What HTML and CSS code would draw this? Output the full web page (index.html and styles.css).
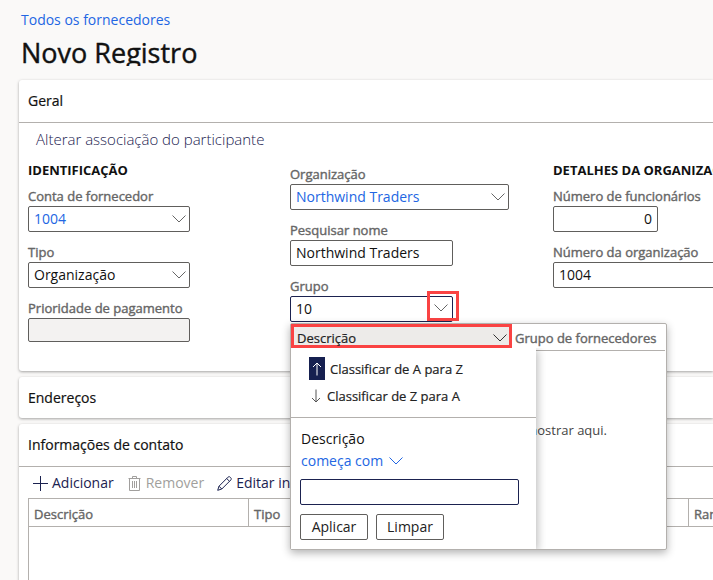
FILE: index.html
```html
<!DOCTYPE html>
<html lang="pt-BR">
<head>
<meta charset="utf-8">
<meta name="viewport" content="width=device-width, initial-scale=1">
<title>Novo Registro</title>
<link rel="stylesheet" href="styles.css">
</head>
<body>
<header class="page-header">
  <a class="breadcrumb" href="#">Todos os fornecedores</a>
  <h1 class="page-title">Novo Registro</h1>
</header>
<main class="sections">
  <section class="card general">
    <h2 class="card-title ruled">Geral</h2>
    <button class="command" type="button">Alterar associação do participante</button>
    <div class="columns">
      <div class="column">
        <h3 class="group-title">IDENTIFICAÇÃO</h3>
        <div class="field">
          <label for="account">Conta de fornecedor</label>
          <div class="box mid">
            <input id="account" class="linked" type="text" value="1004">
            <button class="drop" type="button" aria-label="Abrir"><svg class="chevron" viewBox="0 0 14 8"><path d="M.5.5 7 7 13.5.5"/></svg></button>
          </div>
        </div>
        <div class="field">
          <label for="type">Tipo</label>
          <div class="box mid">
            <select id="type"><option>Organização</option></select>
            <svg class="chevron over" viewBox="0 0 14 8"><path d="M.5.5 7 7 13.5.5"/></svg>
          </div>
        </div>
        <div class="field">
          <label for="priority">Prioridade de pagamento</label>
          <div class="box mid disabled"><input id="priority" type="text" disabled></div>
        </div>
      </div>
      <div class="column untitled">
        <div class="field">
          <label for="org">Organização</label>
          <div class="box wide">
            <input id="org" class="linked" type="text" value="Northwind Traders">
            <button class="drop" type="button" aria-label="Abrir"><svg class="chevron" viewBox="0 0 14 8"><path d="M.5.5 7 7 13.5.5"/></svg></button>
          </div>
        </div>
        <div class="field">
          <label for="search">Pesquisar nome</label>
          <div class="box"><input id="search" type="text" value="Northwind Traders"></div>
        </div>
        <div class="field lookup-field">
          <label for="group">Grupo</label>
          <div class="box focused">
            <input id="group" type="text" value="10">
            <button class="drop marked" type="button" aria-label="Abrir"><svg class="chevron" viewBox="0 0 14 8"><path d="M.5.5 7 7 13.5.5"/></svg></button>
          </div>
          <div class="lookup">
            <div class="lookup-head">
              <button class="lookup-sort" type="button">Descrição<svg class="chevron dark" viewBox="0 0 14 8"><path d="M.5.5 7 7 13.5.5"/></svg></button>
              <span class="lookup-col">Grupo de fornecedores</span>
            </div>
            <p class="lookup-empty">mostrar aqui.</p>
            <div class="menu">
              <div class="menu-sorts">
                <button class="sort" type="button"><span class="arrow on"><svg viewBox="0 0 10 14"><path d="M5 13.5V1M1 5l4-4 4 4"/></svg></span>Classificar de A para Z</button>
                <button class="sort" type="button"><span class="arrow"><svg viewBox="0 0 10 14"><path d="M5 .5V13M1 9l4 4 4-4"/></svg></span>Classificar de Z para A</button>
              </div>
              <div class="menu-filter">
                <label for="filter">Descrição</label>
                <button class="operator" type="button">começa com<svg class="chevron blue" viewBox="0 0 14 8"><path d="M.5.5 7 7 13.5.5"/></svg></button>
                <input id="filter" class="filter-input" type="text">
                <div class="menu-actions">
                  <button class="btn" type="button">Aplicar</button>
                  <button class="btn" type="button">Limpar</button>
                </div>
              </div>
            </div>
          </div>
        </div>
      </div>
      <div class="column">
        <h3 class="group-title">DETALHES DA ORGANIZAÇÃO</h3>
        <div class="field">
          <label for="staff">Número de funcionários</label>
          <div class="box small"><input id="staff" class="number" type="text" value="0"></div>
        </div>
        <div class="field">
          <label for="orgno">Número da organização</label>
          <div class="box wide"><input id="orgno" type="text" value="1004"></div>
        </div>
      </div>
    </div>
  </section>
  <section class="card"><h2 class="card-title">Endereços</h2></section>
  <section class="card contacts">
    <h2 class="card-title ruled">Informações de contato</h2>
    <div class="toolbar">
      <button class="tool" type="button"><svg class="icon" viewBox="0 0 15 15"><path d="M7.500 0v15M0 7.500h15"/></svg>Adicionar</button>
      <button class="tool" type="button" disabled><svg class="icon" viewBox="0 0 15 15"><path d="M1.500 2.500h12M5.500 2.500v-2h4v2M2.500 2.500v12h10v-12M5.500 5v7M7.500 5v7M9.500 5v7"/></svg>Remover</button>
      <button class="tool" type="button"><svg class="icon thin" viewBox="0 0 15 15"><path d="M.7 14.300 2 10.200 11 1.200c.7-.7 1.600-.7 2.200 0l.6.6c.6.6.6 1.500 0 2.200l-9 9zM2 10.200l2.800 2.800M9.700 2.500l2.800 2.800"/></svg>Editar informações</button>
    </div>
    <table class="grid">
      <thead><tr><th class="c-desc" scope="col">Descrição</th><th class="c-type" scope="col">Tipo</th><th scope="col">Rank</th></tr></thead>
      <tbody><tr><td colspan="3"></td></tr></tbody>
    </table>
  </section>
</main>
</body>
</html>
```
FILE: styles.css
```css
* { box-sizing: border-box; }
body {
  margin: 0;
  background: #faf9f8;
  color: #111;
  font: 14px/20px "Open Sans", "Noto Sans", sans-serif;
  overflow: hidden;
}
button, input, select { font: inherit; color: inherit; margin: 0; }
button { background: none; border: 0; padding: 0; white-space: nowrap; }
h1, h2, h3, p { margin: 0; }
svg { display: block; fill: none; stroke: currentColor; flex: none; }

.page-header { padding: 10px 21px 14px; }
.breadcrumb { display: block; color: #2266e3; text-decoration: none; }
.page-title { height: 36px; font-size: 27px; line-height: 46px; font-weight: 400; -webkit-text-stroke: .4px; overflow: hidden; }

.sections { display: flex; flex-direction: column; gap: 6px; padding-left: 19px; overflow: hidden; padding-top: 3px; margin-top: -3px; }
.card { background: #fff; border-radius: 3px 0 0 3px; box-shadow: 0 1px 3px rgba(0, 0, 0, .35); }
.general { min-height: 291px; }
.card-title { padding: 11px 9px 10px; font-size: 14px; font-weight: 400; -webkit-text-stroke: .2px; }
.ruled { padding-bottom: 11px; border-bottom: 1px solid #b3b0ad; }
.command { display: block; padding: 6px 17px; color: #1b2250; font-size: 15px; font-weight: 300; }

.columns { display: grid; grid-template-columns: 262px 263px minmax(0, 1fr); padding: 5px 0 0 9px; }
.untitled { padding-top: 4px; }
.group-title { margin-bottom: 6px; font-size: 13px; line-height: 20px; font-weight: 700; white-space: nowrap; }
.field { margin-bottom: 10px; font-size: 14px; }
.field > label { display: block; height: 20px; color: #666; font-size: 13px; -webkit-text-stroke: .4px; white-space: nowrap; }
.box { position: relative; display: flex; width: 163px; height: 26px; border: 1px solid #605e5c; border-radius: 2px; background: #fff; }
.box input, .box select { flex: 1; min-width: 0; width: 100%; border: 0; outline: 0; padding: 0 5px; background: none; appearance: none; }
.box .linked { color: #2266e3; }
.box .number { text-align: right; }
.mid { width: 162px; }
.wide { width: 219px; }
.small { width: 105px; }
.disabled { height: 24px; background: #f3f2f1; }
.focused { border-color: #1b2250; }
.chevron { width: 14px; height: 8px; color: #666; }
.over { position: absolute; right: 3px; top: 8px; pointer-events: none; }
.drop { display: flex; align-items: center; padding: 0 3px; }
.drop.marked { position: absolute; right: -7px; top: -6px; width: 32px; height: 30px; padding: 4px 0 0 4px; border: 3px solid #fa4343; }

.lookup-field { position: relative; }
.lookup { position: absolute; z-index: 2; top: 47px; left: 0; width: 377px; height: 227px; background: #fff; border: 1px solid #b3b0ad; border-radius: 2px; box-shadow: 0 3px 8px rgba(0, 0, 0, .3); }
.lookup-head { display: flex; height: 27px; margin-right: 1px; border-bottom: 1px solid #b3b0ad; }
.lookup-sort { display: flex; align-items: center; justify-content: space-between; width: 221px; height: 24px; padding: 3px 2px 0 3px; background: #edebe9; border: 3px solid #fa4343; font-size: 13px; color: #222; -webkit-text-stroke: .2px; }
.lookup-col { padding: 4px 0 0 3px; color: #666; font-size: 13px; -webkit-text-stroke: .4px; white-space: nowrap; }
.lookup-empty { padding: 69px 59px 0 0; text-align: right; font-size: 13px; color: #444; }
.dark { color: #333; }
.blue { color: #2266e3; }
.menu { position: absolute; top: 24px; left: 0; width: 245px; height: 201px; background: #fff; box-shadow: 2px 2px 8px rgba(0, 0, 0, .25); clip-path: inset(0 -10px 0 0); }
.menu-sorts { display: grid; gap: 4px; padding: 9px 18px 10px; border-bottom: 1px solid #b3b0ad; }
.sort { display: flex; align-items: center; gap: 5px; height: 23px; font-size: 13px; color: #222; -webkit-text-stroke: .2px; }
.arrow { display: flex; align-items: center; justify-content: center; width: 13px; height: 23px; color: #555; }
.arrow svg { width: 10px; height: 14px; }
.arrow.on { width: 16px; background: #162050; color: #fff; }
.menu-filter { padding: 11px 9px; }
.menu-filter label { display: block; padding-left: 1px; }
.operator { display: flex; align-items: center; gap: 6px; height: 24px; padding-left: 1px; color: #2266e3; }
.filter-input { display: block; width: 219px; height: 26px; margin: 6px 0 9px; padding: 0 5px; border: 1px solid #1b2250; border-radius: 2px; outline: 0; }
.menu-actions { display: flex; gap: 8px; }
.btn { width: 68px; height: 26px; border: 1px solid #605e5c; border-radius: 2px; color: #222; }

.toolbar { display: flex; gap: 13px; padding: 6px 14px 5px; }
.tool { display: flex; align-items: center; gap: 4px; height: 20px; color: #1b2250; }
.tool:disabled { color: #a19f9d; }
.icon { width: 15px; height: 15px; }
.grid { width: calc(100% + 40px); margin-left: 9px; border-collapse: separate; border-spacing: 0; table-layout: fixed; border: 1px solid #b3b0ad; }
.grid th { height: 28px; padding: 2px 5px 0; border-bottom: 1px solid #b3b0ad; border-left: 1px solid #b3b0ad; color: #666; font-size: 13px; font-weight: 400; -webkit-text-stroke: .4px; text-align: left; }
.grid th:first-child { border-left: 0; }
.grid td { height: 80px; padding: 0; }
.c-desc { width: 219px; }
.c-type { width: 440px; }
```
